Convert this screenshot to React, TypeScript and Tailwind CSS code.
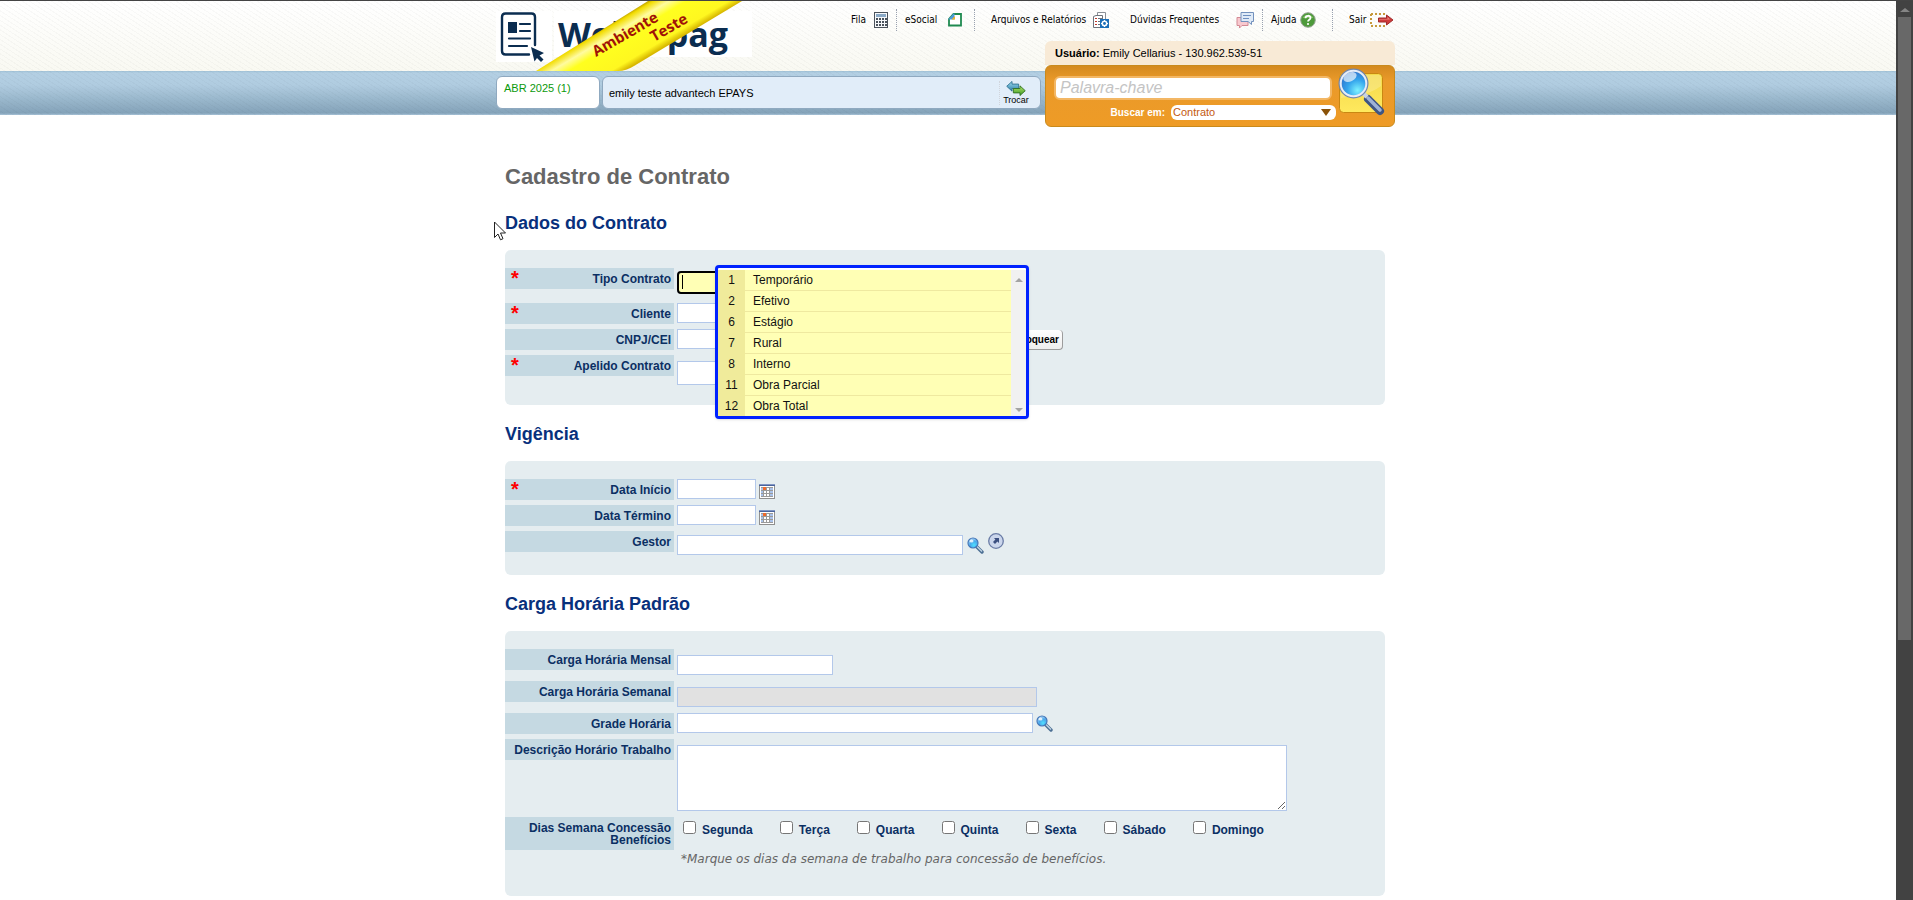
import React from 'react';
import clsx from 'clsx';

const contractTypes = [
  { code: 1, name: 'Temporário' },
  { code: 2, name: 'Efetivo' },
  { code: 6, name: 'Estágio' },
  { code: 7, name: 'Rural' },
  { code: 8, name: 'Interno' },
  { code: 11, name: 'Obra Parcial' },
  { code: 12, name: 'Obra Total' },
];

const weekDays = ['Segunda', 'Terça', 'Quarta', 'Quinta', 'Sexta', 'Sábado', 'Domingo'];

/* ---------- Icons ---------- */

const CalculatorIcon = () => (
  <svg width="14" height="16" viewBox="0 0 14 16" shapeRendering="crispEdges">
    <rect x="0" y="0" width="14" height="16" fill="#4a525b" />
    <rect x="1" y="1" width="12" height="14" fill="#f6f8fa" />
    <rect x="2" y="2" width="10" height="3" fill="#8aa9c6" />
    {[7, 10, 13].map((y) =>
      [2, 5, 8, 11].map((x) => <rect key={`${x}-${y}`} x={x} y={y - 1} width="2" height="2" fill="#4a525b" />)
    )}
  </svg>
);

const DocumentIcon = () => (
  <svg width="14" height="14" viewBox="0 0 14 14">
    <path d="M5.5 1H13V12.500H1V6Z" fill="#fff" stroke="#1f8a50" strokeWidth="1.8" />
    <path d="M0.500 6L5.500 0.500H6.500V6.500H0.500Z" fill="#4b9bd8" />
    <path d="M3.500 6.500L7 3V6.500Z" fill="#f0b429" />
  </svg>
);

const ReportIcon = () => (
  <svg width="17" height="16" viewBox="0 0 17 16">
    <path d="M4.500 0.500H12.500V11.500H4.500Z" fill="#fff" stroke="#8a8f96" />
    <path d="M0.500 4.500L3 3.500H9.500V15.500H0.500Z" fill="#fff" stroke="#6d737b" />
    <path d="M2 6.500H4M2 9.500H4M2 12.500H4" stroke="#c0392b" />
    <path d="M5 6.500H9M5 9.500H8M5 12.500H8" stroke="#6d737b" />
    <rect x="7" y="7" width="9" height="9" fill="#1c6fb8" />
    <circle cx="11.500" cy="11.500" r="2.200" fill="none" stroke="#fff" strokeWidth="1.500" />
    <path d="M11.500 8V9.500M11.500 13.500V15M8 11.500H9.500M13.500 11.500H15" stroke="#fff" />
  </svg>
);

const ChatIcon = () => (
  <svg width="18" height="17" viewBox="0 0 18 17">
    <path d="M1 5.500H12V13.500H6L3.500 16V13.500H1Z" fill="#f8c9cf" stroke="#d38a94" />
    <path d="M5 0.500H17.500V9.500H15.500V12.500L12 9.500H5Z" fill="#dfeaf7" stroke="#7391bd" />
    <path d="M7 3.500H15M7 6.500H13" stroke="#6e8fc0" />
  </svg>
);

const HelpIcon = () => (
  <svg width="16" height="16" viewBox="0 0 16 16">
    <circle cx="8" cy="8" r="7.300" fill="#4d9a3a" stroke="#98a596" />
    <path d="M2.500 6A6 5 0 0 1 13.500 6Z" fill="#7fbf63" />
    <path d="M5.500 6.200C5.500 3 10.500 3 10.500 6C10.500 7.800 8 7.800 8 9.500" fill="none" stroke="#fff" strokeWidth="1.800" />
    <circle cx="8" cy="12" r="1.100" fill="#fff" />
  </svg>
);

const ExitIcon = () => (
  <svg width="24" height="14" viewBox="0 0 24 14">
    <path d="M1 1H15M1 13H15" stroke="#c69a3c" strokeWidth="2" strokeDasharray="2 2" />
    <path d="M1 1V13" stroke="#c69a3c" strokeWidth="2" strokeDasharray="2 2" />
    <path d="M8.500 5H16.500V2L23 7L16.500 12V9H8.500Z" fill="#cf3b3b" stroke="#a02c2c" />
    <path d="M9 6H17.500V4L20 6.500H9Z" fill="#ee8a84" />
  </svg>
);

const SwapIcon = () => (
  <svg width="22" height="16" viewBox="0 0 22 17">
    <defs>
      <linearGradient id="swapBlue" x1="0" y1="0" x2="0" y2="1">
        <stop offset="0" stopColor="#9fdcf0" />
        <stop offset="1" stopColor="#2a7da5" />
      </linearGradient>
      <linearGradient id="swapGreen" x1="0" y1="0" x2="0" y2="1">
        <stop offset="0" stopColor="#b4e46a" />
        <stop offset="1" stopColor="#3a9a24" />
      </linearGradient>
    </defs>
    <path d="M0.500 6L6.500 0.500V3.500H14V8.500H6.500V11.500Z" fill="url(#swapBlue)" stroke="#2c6f8f" />
    <path d="M21.500 11L15.500 5.500V8.500H8V13.500H15.500V16.500Z" fill="url(#swapGreen)" stroke="#2d6d22" />
  </svg>
);

const CalendarIcon = () => (
  <svg width="16" height="15" viewBox="0 0 16 15" shapeRendering="crispEdges">
    <rect x="0" y="0" width="16" height="15" fill="#8f8f8f" />
    <rect x="1" y="2" width="14" height="12" fill="#fff" />
    <rect x="0" y="0" width="16" height="1" fill="#8096c4" />
    <rect x="0" y="1" width="16" height="1" fill="#4a649c" />
    <rect x="2" y="3" width="12" height="10" fill="#9a9a9a" />
    {[4, 7, 10].map((y) =>
      [2, 5, 8, 11].map((x) => (
        <rect key={`${x}-${y}`} x={x} y={y} width={x === 11 ? 3 : 2} height="2" fill={x === 2 || x === 11 ? '#a9c2ea' : '#fff'} />
      ))
    )}
    <rect x="4" y="3" width="3" height="3" fill="#ee6a2c" />
  </svg>
);

const LensIcon = () => (
  <svg width="17" height="17" viewBox="0 0 17 17">
    <defs>
      <radialGradient id="lensSmall" cx="0.600" cy="0.700" r="0.800">
        <stop offset="0" stopColor="#4fe0ff" />
        <stop offset="0.500" stopColor="#49a6ea" />
        <stop offset="1" stopColor="#dceeff" />
      </radialGradient>
    </defs>
    <path d="M9.500 9.500L15 15" stroke="#4c6f94" strokeWidth="3.400" strokeLinecap="round" />
    <path d="M10 9.500L15 14.500" stroke="#c3d6e6" strokeWidth="1.200" />
    <circle cx="6" cy="6" r="5" fill="url(#lensSmall)" stroke="#4477b8" strokeWidth="1.200" />
    <ellipse cx="4.500" cy="4" rx="2" ry="1.500" fill="#fff" opacity="0.800" />
  </svg>
);

const OpenIcon = () => (
  <svg width="16" height="16" viewBox="0 0 16 16">
    <circle cx="8" cy="8" r="7.300" fill="#cbd6ec" stroke="#6a7ca6" strokeWidth="1.300" />
    <path d="M6 5H11V10L9.400 8.600L7 11L5 9L7.400 6.600Z" fill="#3b4f80" />
  </svg>
);

const SearchButtonIcon = () => (
  <svg width="48" height="48" viewBox="0 0 48 48">
    <defs>
      <linearGradient id="searchTile" x1="0" y1="0" x2="0" y2="1">
        <stop offset="0" stopColor="#f3d94a" />
        <stop offset="1" stopColor="#ffe95e" />
      </linearGradient>
      <radialGradient id="searchGlass" cx="0.650" cy="0.750" r="0.850">
        <stop offset="0" stopColor="#7df2ff" />
        <stop offset="0.450" stopColor="#35a5ec" />
        <stop offset="1" stopColor="#2b62c4" />
      </radialGradient>
    </defs>
    <rect x="1.500" y="5.500" width="43" height="39" rx="4" fill="url(#searchTile)" stroke="#c98712" />
    <path d="M3 30C14 28 30 28 43 18V9Q43 7 41 7H5Q3 7 3 9Z" fill="#fff" opacity="0.200" />
    <path d="M30 31L42 43" stroke="#3f5583" strokeWidth="8" strokeLinecap="round" />
    <path d="M30 30L42 42" stroke="#9fb3d6" strokeWidth="3.500" strokeLinecap="round" />
    <path d="M24 24L29 29" stroke="#c8d2e2" strokeWidth="4" />
    <circle cx="15.500" cy="15.500" r="13.500" fill="url(#searchGlass)" stroke="#7186ab" strokeWidth="3" />
    <circle cx="15.500" cy="15.500" r="12.800" fill="none" stroke="#e6edf8" strokeWidth="2" />
    <ellipse cx="12" cy="9" rx="7" ry="4.500" fill="#fff" opacity="0.650" transform="rotate(-25 12 9)" />
  </svg>
);

const LogoMark = () => (
  <svg width="44" height="50" viewBox="0 0 44 50">
    <path d="M35 33V5Q35 1.500 31.500 1.500H5.500Q2 1.500 2 5V39Q2 42.500 5.500 42.500H29" fill="none" stroke="#0b2d50" strokeWidth="2.400" strokeLinecap="round" />
    <rect x="8" y="10" width="9" height="11" fill="#0b2d50" />
    <path d="M20 12H30M20 19H30M9 26.500H30M9 34H27" stroke="#0b2d50" strokeWidth="2.200" strokeLinecap="round" />
    <path d="M31 35L44 41L39.500 43.500L43.500 47.500L41 50L37 46L34.500 49.500Z" fill="#0b2d50" />
  </svg>
);

/* ---------- Building blocks ---------- */

interface NavItemProps {
  label: string;
  icon: React.ReactNode;
  className?: string;
}

const NavItem = ({ label, icon, className }: NavItemProps) => (
  <a
    href="#"
    className={clsx(
      "flex h-[22px] shrink-0 items-center justify-between whitespace-nowrap font-['DejaVu_Sans_Condensed','DejaVu_Sans',sans-serif] text-[10px] leading-none text-black",
      className
    )}
  >
    {label}
    {icon}
  </a>
);

interface FormRowProps {
  label: string;
  htmlFor?: string;
  required?: boolean;
  className?: string;
  fieldClassName?: string;
  children: React.ReactNode;
}

const FormRow = ({ label, htmlFor, required, className, fieldClassName, children }: FormRowProps) => (
  <div className={clsx('flex items-start', className || 'min-h-[26px]')}>
    <label
      htmlFor={htmlFor}
      className="flex w-[169px] shrink-0 justify-between bg-[#c5d9e2] pr-[3px] pl-1.5 text-xs leading-3 font-bold text-[#0b2f63]"
    >
      {required && <span className="text-[20px] leading-[21px] text-[#ff0000]">*</span>}
      <span className="ml-auto pt-[5px] pb-1 text-right">{label}</span>
    </label>
    <div className={clsx('ml-[3px] flex grow items-start', fieldClassName)}>{children}</div>
  </div>
);

const Field = ({ className, ...props }: React.InputHTMLAttributes<HTMLInputElement>) => (
  <input
    type="text"
    className={clsx('border border-[#b3c8ea] px-1 text-xs outline-none', className)}
    {...props}
  />
);

const Section = ({ title, children }: { title: string; children: React.ReactNode }) => (
  <section className="mb-[18px]">
    <h2 className="mb-4 text-lg leading-[22px] font-bold text-[#08307c]">{title}</h2>
    <div className="rounded-md bg-[#e5edf0] py-[18px]">{children}</div>
  </section>
);

/* ---------- Header ---------- */

const Header = () => (
  <header className="h-[114px] bg-[repeating-linear-gradient(33deg,transparent_0px,transparent_3px,rgba(0,0,0,0.025)_3px,rgba(0,0,0,0.025)_4px),linear-gradient(to_bottom,#ffffff_0px,#f9f9f2_70px,#9fc0d6_70px,#b3cfe3_72px,#b0cce0_84px,#84a3b9_112px,#a9c4d8_114px)]">
    <div className="mx-auto grid max-w-[904px] grid-cols-[260px_1fr_350px] grid-rows-[40px_30px_44px] pr-[5px]">
      {/* Logo with the test environment ribbon */}
      <div className="relative col-start-1 row-span-2 row-start-1 flex items-start pt-2.5">
        <div className="bg-white pt-px pr-2 pl-1">
          <LogoMark />
        </div>
        <div className="ml-0.5 bg-white pr-6 pl-1 font-['Open_Sans','Noto_Sans',sans-serif] text-[34px] leading-[46px] font-bold text-[#0b2d50]">
          Webfopag
        </div>
        <svg className="absolute top-0 left-[40px]" width="208" height="70" viewBox="0 0 208 70">
          <defs>
            <linearGradient id="ribbon" gradientUnits="userSpaceOnUse" x1="59" y1="31" x2="100" y2="100">
              <stop offset="0" stopColor="#b99a00" />
              <stop offset="0.040" stopColor="#f2dc00" />
              <stop offset="0.140" stopColor="#fffba0" />
              <stop offset="0.250" stopColor="#ffff1f" />
              <stop offset="0.520" stopColor="#fff720" />
              <stop offset="0.600" stopColor="#d8b800" />
            </linearGradient>
          </defs>
          <path d="M112 0H206L98 65Q90 70 82 70H0Z" fill="url(#ribbon)" />
          <g fill="#a01208" fontFamily="'Open Sans', 'Noto Sans', sans-serif" fontWeight="700" fontSize="15">
            <text transform="translate(60 56) rotate(-30)">Ambiente</text>
            <text transform="translate(118 41) rotate(-30)">Teste</text>
          </g>
        </svg>
      </div>

      <nav className="col-span-2 col-start-2 row-start-1 flex justify-end pt-2">
        <NavItem label="Fila" icon={<CalculatorIcon />} className="w-[45px] pr-2" />
        <NavItem label="eSocial" icon={<DocumentIcon />} className="w-[78px] border-l border-dotted border-gray-400 pr-3 pl-2" />
        <NavItem label="Arquivos e Relatórios" icon={<ReportIcon />} className="w-[148px] border-l border-dotted border-gray-400 pr-3 pl-4" />
        <NavItem label="Dúvidas Frequentes" icon={<ChatIcon />} className="w-[140px] pr-2 pl-2" />
        <NavItem label="Ajuda" icon={<HelpIcon />} className="w-[70px] border-l border-dotted border-gray-400 pr-4 pl-2" />
        <NavItem label="Sair" icon={<ExitIcon />} className="w-[63px] border-l border-dotted border-gray-400 pr-px pl-4" />
      </nav>

      {/* Reference month and company */}
      <div className="col-span-2 col-start-1 row-start-3 mr-1 flex gap-0.5 pt-[5px]">
        <div className="h-[33px] w-[104px] shrink-0 rounded-md border border-[#8fa9c0] bg-white pt-1 pl-[7px] text-[11px] leading-[14px] text-[#0c9a0c]">
          ABR 2025 (1)
        </div>
        <div className="flex h-[33px] grow items-center rounded-md border border-[#8fa9c0] bg-[#e1edf9] pl-1.5 text-[11px] leading-4 text-black">
          <span className="grow">emily teste advantech EPAYS</span>
          <a href="#" className="flex h-6 w-[41px] flex-col items-center justify-center border-l border-dotted border-gray-300 pr-2 text-[9px] leading-[9px]">
            <SwapIcon />
            Trocar
          </a>
        </div>
      </div>

      {/* User and search box */}
      <div className="col-start-3 row-span-2 row-start-2">
        <div className="h-6 rounded-t-md bg-[#f8ead6] pl-2.5 text-[11px] leading-6 text-black">
          <b>Usuário:</b> Emily Cellarius - 130.962.539-51
        </div>
        <form className="flex h-[62px] rounded-md border border-[#c98a1c] bg-linear-to-b from-[#d48a1f] via-[#ea9a2a] via-25% to-[#ee9b26] text-[11px]">
          <div className="grow pt-2.5 pl-2">
            <input
              type="text"
              aria-label="Palavra-chave"
              placeholder="Palavra-chave"
              className="block h-6 w-[278px] rounded-md border-2 border-[#f3b765] bg-white px-1 text-base leading-5 italic placeholder:text-[#c4c4c4]"
            />
            <div className="mt-[5px] flex h-[15px] items-center justify-end">
              <label htmlFor="searchIn" className="mr-1.5 text-[10px] font-bold text-white">
                Buscar em:
              </label>
              <div className="relative">
                <select id="searchIn" className="block h-[15px] w-[165px] appearance-none rounded-md bg-white pl-0.5 text-[11px] leading-[15px] text-[#c35a10]">
                  <option>Contrato</option>
                </select>
                <svg className="pointer-events-none absolute top-1 right-[5px]" width="10" height="7" viewBox="0 0 10 7">
                  <path d="M0 0H10L5 7Z" fill="#8a5208" />
                </svg>
              </div>
            </div>
          </div>
          <button type="submit" aria-label="Buscar" className="mr-2 ml-0.5 flex shrink-0 items-start pt-0.5">
            <SearchButtonIcon />
          </button>
        </form>
      </div>
    </div>
  </header>
);

/* ---------- Suggestion list of the contract types ---------- */

const TypeSuggestions = () => (
  <div className="absolute -top-[3px] left-[38px] z-10 flex h-[154px] w-[314px] overflow-hidden rounded-sm border-[3px] border-[#0022ff] bg-white pt-0.5 shadow-sm">
    <ul className="grow text-xs leading-[21px] text-[#111]">
      {contractTypes.map((type) => (
        <li key={type.code} className="flex h-[21px]">
          <span className="w-[27px] bg-[#f0eb9b] text-center">{type.code}</span>
          <span className="grow border-b border-[#efe9a0] bg-[#ffffb5] pl-2">{type.name}</span>
        </li>
      ))}
    </ul>
    <div className="flex w-[15px] flex-col items-center justify-between bg-[#f1f1f1] pt-2 pb-1">
      <svg width="8" height="4" viewBox="0 0 8 4">
        <path d="M0 4L4 0L8 4Z" fill="#a3a3a3" />
      </svg>
      <svg width="8" height="4" viewBox="0 0 8 4">
        <path d="M0 0L4 4L8 0Z" fill="#a3a3a3" />
      </svg>
    </div>
  </div>
);

const ContractForm = () => (
  <main className="mx-auto max-w-[904px] pt-[49px] pr-[15px] pl-[9px]">
    <h1 className="mb-[22px] text-[22px] leading-[26px] font-bold text-[#666]">Cadastro de Contrato</h1>

    <Section title="Dados do Contrato">
      <FormRow label="Tipo Contrato" htmlFor="type" required className="min-h-[35px]" fieldClassName="relative pt-[3px]">
        <Field id="type" className="h-[23px] w-[80px] rounded-sm border-2 border-black! bg-[#ffffb5]" />
        <span className="absolute top-[7px] left-[5px] h-[14px] w-px bg-black" />
        <TypeSuggestions />
      </FormRow>
      <FormRow label="Cliente" htmlFor="client" required>
        <Field id="client" className="h-5 w-[286px] bg-white" />
      </FormRow>
      <FormRow label="CNPJ/CEI" htmlFor="cnpj">
        <Field id="cnpj" className="h-5 w-[286px] bg-white" />
        <button
          type="button"
          className="mt-px ml-[37px] h-5 w-[63px] rounded-sm border-r border-b border-[#9c9c9c] bg-linear-to-b from-white to-[#eeeeee] pr-[3px] text-right text-[10px] font-bold text-black"
        >
          Bloquear
        </button>
      </FormRow>
      <FormRow label="Apelido Contrato" htmlFor="nickname" required className="min-h-8" fieldClassName="pt-1.5">
        <Field id="nickname" className="h-6 w-[286px] bg-white" />
      </FormRow>
    </Section>

    <Section title="Vigência">
      <FormRow label="Data Início" htmlFor="start" required>
        <Field id="start" className="h-5 w-[79px] bg-white" />
        <button type="button" aria-label="Calendário" className="mt-[5px] ml-[3px]">
          <CalendarIcon />
        </button>
      </FormRow>
      <FormRow label="Data Término" htmlFor="end">
        <Field id="end" className="h-5 w-[79px] bg-white" />
        <button type="button" aria-label="Calendário" className="mt-[5px] ml-[3px]">
          <CalendarIcon />
        </button>
      </FormRow>
      <FormRow label="Gestor" htmlFor="manager">
        <Field id="manager" className="mt-1 h-5 w-[286px] bg-white" />
        <button type="button" aria-label="Pesquisar gestor" className="mt-1.5 ml-1">
          <LensIcon />
        </button>
        <button type="button" aria-label="Abrir gestor" className="mt-0.5 ml-1">
          <OpenIcon />
        </button>
      </FormRow>
    </Section>

    <Section title="Carga Horária Padrão">
      <FormRow label="Carga Horária Mensal" htmlFor="monthly" className="min-h-8" fieldClassName="pt-1.5">
        <Field id="monthly" className="h-5 w-[156px] bg-white" />
      </FormRow>
      <FormRow label="Carga Horária Semanal" htmlFor="weekly" className="min-h-8" fieldClassName="pt-1.5">
        <Field id="weekly" disabled className="h-5 w-[360px] bg-[#e1e1e1]" />
      </FormRow>
      <FormRow label="Grade Horária" htmlFor="schedule">
        <Field id="schedule" className="h-5 w-[356px] bg-white" />
        <button type="button" aria-label="Pesquisar grade" className="mt-0.5 ml-[3px]">
          <LensIcon />
        </button>
      </FormRow>
      <FormRow label="Descrição Horário Trabalho" htmlFor="description" className="min-h-[78px]" fieldClassName="pt-1.5">
        <textarea id="description" className="h-[66px] w-[610px] resize border border-[#b3c8ea] bg-white px-1 text-xs outline-none" />
      </FormRow>
      <FormRow label="Dias Semana Concessão Benefícios" className="min-h-[61px]" fieldClassName="flex-col pt-1 pl-1.5">
        <div className="flex gap-[27px]">
          {weekDays.map((day) => (
            <label key={day} className="flex items-start gap-1.5 text-xs leading-4 font-bold text-[#0b2f63]">
              <input type="checkbox" className="h-[13px] w-[13px]" />
              <span className="pt-px">{day}</span>
            </label>
          ))}
        </div>
        <p className="mt-[11px] -ml-0.5 font-['DejaVu_Sans',sans-serif] text-xs leading-5 text-[#666] italic">
          *Marque os dias da semana de trabalho para concessão de benefícios.
        </p>
      </FormRow>
    </Section>
  </main>
);

export default function App() {
  return (
    <div className="flex h-screen overflow-hidden border-t border-[#444] bg-white font-['Liberation_Sans',Arial,sans-serif]">
      <div className="relative grow overflow-hidden">
        <Header />
        <ContractForm />
        {/* Mouse pointer */}
        <svg className="absolute top-[220px] left-[494px]" width="13" height="20" viewBox="0 0 13 20">
          <path d="M0.500 1V16.500L4 13L6.500 18.800L9 17.700L6.500 12H11.500Z" fill="#fff" stroke="#222" />
        </svg>
      </div>
      {/* Page scrollbar */}
      <div className="flex w-[17px] shrink-0 flex-col items-center bg-[#424242] pt-[7px]">
        <svg className="mb-[5px] shrink-0" width="10" height="4" viewBox="0 0 10 4">
          <path d="M0 4L5 0L10 4Z" fill="#858585" />
        </svg>
        <div className="w-[13px] flex-[12] bg-[#686868]" />
        <div className="flex-[5]" />
      </div>
    </div>
  );
}
